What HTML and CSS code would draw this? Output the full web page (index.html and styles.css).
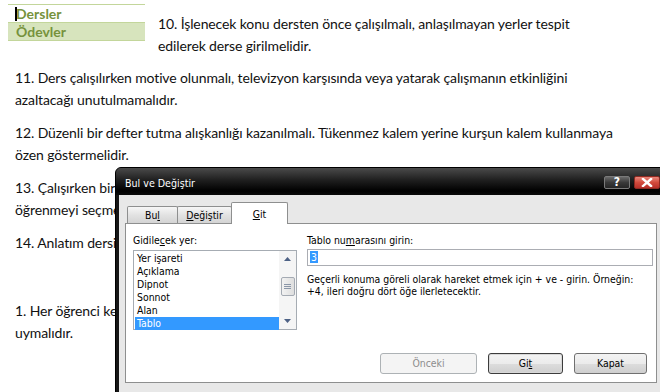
FILE: index.html
```html
<!DOCTYPE html>
<html lang="tr">
<head>
<meta charset="utf-8">
<title>Bul ve Değiştir</title>
<link rel="stylesheet" href="styles.css">
</head>
<body>
<main class="doc">
  <div class="head">
    <div class="styles">
      <div class="style-row"><span class="caret"></span>Dersler</div>
      <div class="style-row sel">Ödevler</div>
    </div>
    <p class="para">10. İşlenecek konu dersten önce çalışılmalı, anlaşılmayan yerler tespit<br>edilerek derse girilmelidir.</p>
  </div>
  <p class="para">11. Ders çalışılırken motive olunmalı, televizyon karşısında veya yatarak çalışmanın etkinliğini<br>azaltacağı unutulmamalıdır.</p>
  <p class="para">12. Düzenli bir defter tutma alışkanlığı kazanılmalı. Tükenmez kalem yerine kurşun kalem kullanmaya<br>özen göstermelidir.</p>
  <p class="para">13. Çalışırken bir konuyu ezberlemek yerine anlayarak<br>öğrenmeyi seçmelidir.</p>
  <p class="para">14. Anlatım dersi dikkatle dinlenmelidir.</p>
  <p class="para gap">1. Her öğrenci kendisine verilen kurallara<br>uymalıdır.</p>
</main>

<div class="dialog">
  <div class="titlebar">
    <span class="title">Bul ve Değiştir</span>
    <span class="tbtn help">?</span>
    <span class="tbtn close">
      <svg width="12" height="9" viewBox="0 0 12 9"><path d="M2 1 L10 8 M10 1 L2 8" stroke="#fff" stroke-width="2.4" stroke-linecap="square"/></svg>
    </span>
  </div>
  <div class="client">
    <div class="tabs">
      <span class="tab t-bul">Bu<u>l</u></span>
      <span class="tab t-deg"><u>D</u>eğiştir</span>
      <span class="tab active t-git"><u>G</u>it</span>
    </div>
    <div class="panel">
      <div class="cols">
        <div class="col">
          <div class="label">Gidile<u>c</u>ek yer:</div>
          <div class="listbox">
            <ul class="items">
              <li>Yer işareti</li>
              <li>Açıklama</li>
              <li>Dipnot</li>
              <li>Sonnot</li>
              <li>Alan</li>
              <li class="selected">Tablo</li>
            </ul>
            <div class="scroll">
              <svg class="arrow" width="7" height="4" viewBox="0 0 7 4"><path d="M0 4 L3.5 0 L7 4 Z" fill="#4d6185"/></svg>
              <div class="thumb">
                <svg width="7" height="6" viewBox="0 0 7 6"><path d="M0 0.5 H7 M0 2.5 H7 M0 4.5 H7" stroke="#8a96a8" stroke-width="1"/></svg>
              </div>
              <svg class="arrow down" width="7" height="4" viewBox="0 0 7 4"><path d="M0 0 L3.5 4 L7 0 Z" fill="#4d6185"/></svg>
            </div>
          </div>
        </div>
        <div class="col">
          <div class="label">Tablo nu<u>m</u>arasını girin:</div>
          <div class="input"><span class="sel-text">3</span></div>
          <p class="hint">Geçerli konuma göreli olarak hareket etmek için + ve - girin. Örneğin:<br>+4, ileri doğru dört öğe ilerletecektir.</p>
        </div>
      </div>
      <div class="buttons">
        <span class="btn disabled">Önceki</span>
        <span class="btn default">Gi<u>t</u></span>
        <span class="btn">Kapat</span>
      </div>
    </div>
  </div>
</div>
</body>
</html>
```

FILE: styles.css
```css
html, body {
  margin: 0;
  padding: 0;
}
body {
  width: 660px;
  height: 392px;
  overflow: hidden;
  position: relative;
  background: #fff;
  font-family: Lato, "Open Sans", sans-serif;
  color: #111;
}

/* document */
.doc {
  padding: 0 8px;
}
.head {
  display: flex;
  align-items: flex-start;
}
.styles {
  width: 137px;
  flex: none;
  margin-top: 4px;
  border-top: 1px solid #c3d69b;
}
.style-row {
  position: relative;
  height: 17px;
  line-height: 18px;
  padding-left: 8px;
  font-size: 14px;
  font-weight: bold;
  color: #76923c;
  border-bottom: 1px solid #c3d69b;
}
.style-row.sel {
  background: #d7e4bd;
}
.caret {
  position: absolute;
  left: 7px;
  top: 2px;
  width: 2px;
  height: 14px;
  background: #000;
}
.para {
  margin: 0 0 11px 7px;
  font-size: 14px;
  line-height: 22px;
  white-space: nowrap;
  letter-spacing: -0.12px;
}
.head .para {
  margin: 13px 0 10px 13px;
}
.para.gap {
  margin-top: 46px;
}

/* dialog */
.dialog {
  position: absolute;
  left: 115px;
  top: 167px;
  width: 552px;
  height: 240px;
  border: 1px solid #000;
  border-radius: 6px 6px 0 0;
  background: #151515;
  font-family: "DejaVu Sans Condensed", "Liberation Sans", Arial, sans-serif;
  font-size: 10.4px;
  color: #000;
}
.titlebar {
  height: 27px;
  display: flex;
  align-items: center;
  padding: 0 8px 0 9px;
  border-radius: 5px 5px 0 0;
  background: linear-gradient(#4a4a4a, #1f1f1f 45%, #000 85%, #0a0a0a);
}
.title {
  color: #fff;
  font-size: 10.6px;
  margin-top: 2px;
}
.tbtn {
  height: 13px;
  width: 26px;
  box-sizing: border-box;
  border-radius: 2px;
  display: flex;
  align-items: center;
  justify-content: center;
  margin-top: 1px;
}
.help {
  margin-left: auto;
  margin-right: 4px;
  background: linear-gradient(#6a6a6a, #3a3a3a 50%, #262626);
  border: 1px solid #7a7a7a;
  color: #fff;
  font-weight: bold;
  font-size: 12px;
}
.close {
  background: linear-gradient(#e9867b, #d24b3d 50%, #b8302a);
  border: 1px solid #8e2a22;
}
.client {
  margin: 0 3px;
  height: 212px;
  background: #e8e8e8;
  padding: 7px 0 0 6px;
}
.tabs {
  display: flex;
  align-items: flex-end;
  height: 21px;
  padding-left: 2px;
  position: relative;
  z-index: 1;
}
.tab {
  box-sizing: border-box;
  height: 17px;
  line-height: 16px;
  text-align: center;
  border: 1px solid #8e8f8f;
  border-bottom: none;
  border-radius: 2px 2px 0 0;
  background: linear-gradient(#f6f6f6, #e2e2e2 50%, #d4d4d4);
}
.t-bul { width: 51px; }
.t-deg { width: 55px; margin-left: -1px; }
.tab.active {
  width: 57px;
  height: 22px;
  line-height: 22px;
  margin-left: -1px;
  margin-bottom: -1px;
  background: #fff;
}
.panel {
  box-sizing: border-box;
  width: 532px;
  height: 160px;
  border: 1px solid #8e8f8f;
  background: #fff;
  padding: 10px 3px 8px 7px;
  display: flex;
  flex-direction: column;
}
.cols {
  display: grid;
  grid-template-columns: 164px 1fr;
  column-gap: 10px;
}
.label {
  height: 13px;
  line-height: 13px;
  margin-bottom: 3px;
  white-space: nowrap;
}
.listbox {
  box-sizing: border-box;
  height: 80px;
  border: 1px solid #a6acb3;
  display: flex;
}
.items {
  list-style: none;
  margin: 0;
  padding: 1px 0 0 1px;
  flex: 1;
}
.items li {
  height: 13px;
  line-height: 13px;
  padding-left: 2px;
}
.items li.selected {
  background: #3399ff;
  color: #fff;
}
.scroll {
  width: 17px;
  background: #f5f5f5;
  display: flex;
  flex-direction: column;
  align-items: center;
}
.arrow {
  margin-top: 6px;
}
.arrow.down {
  margin-top: auto;
  margin-bottom: 6px;
}
.thumb {
  box-sizing: border-box;
  width: 14px;
  height: 19px;
  margin-top: 16px;
  border: 1px solid #a4aab3;
  border-radius: 2px;
  background: linear-gradient(90deg, #f2f2f2, #dedede);
  display: flex;
  align-items: center;
  justify-content: center;
}
.input {
  box-sizing: border-box;
  height: 17px;
  margin-top: -1px;
  border: 1px solid #abadb3;
  padding: 1px 2px;
  line-height: 13px;
}
.sel-text {
  background: #3399ff;
  color: #fff;
  padding: 0 1px;
}
.hint {
  margin: 7px 0 0;
  line-height: 12px;
  white-space: nowrap;
}
.buttons {
  margin-top: auto;
  display: flex;
  justify-content: flex-end;
  gap: 11px;
  padding-right: 6px;
}
.btn {
  box-sizing: border-box;
  height: 21px;
  width: 73px;
  line-height: 19px;
  text-align: center;
  border: 1px solid #707070;
  border-radius: 3px;
  background: linear-gradient(#f3f3f3, #ebebeb 50%, #dddddd 51%, #cfcfcf);
}
.btn.disabled {
  width: 97px;
  border-color: #adb2b5;
  background: #f4f4f4;
  color: #8d8d8d;
}
.btn.default {
  width: 75px;
  border-color: #3c3c3c;
  box-shadow: inset 0 0 0 1px #d8d8d8;
}
```
